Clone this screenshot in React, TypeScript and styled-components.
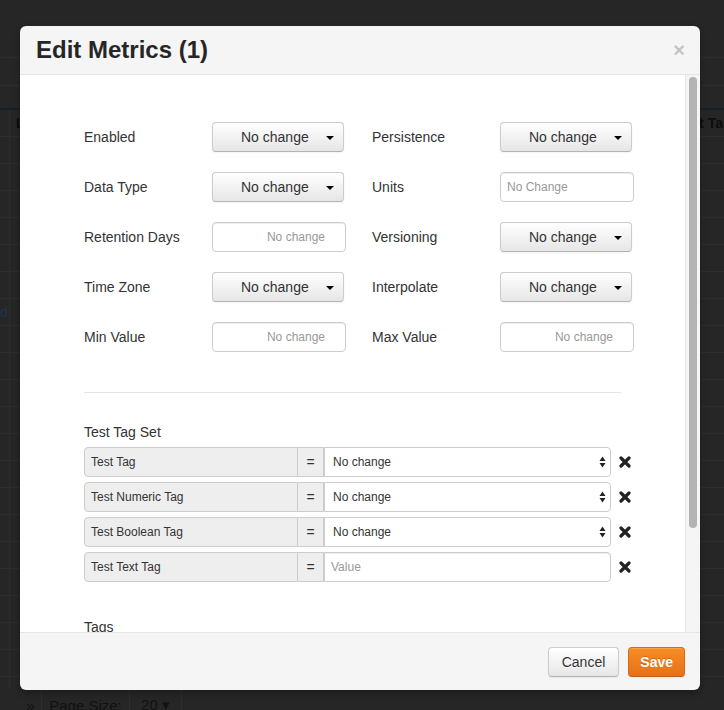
import React from "react";
import styled, { createGlobalStyle } from "styled-components";

const GlobalStyle = createGlobalStyle`
  html, body { margin: 0; padding: 0; height: 100%; background: #262626; overflow: hidden; }
  body { font-family: "Liberation Sans", Arial, Helvetica, sans-serif; }
  * { box-sizing: border-box; }
`;

/* ---------- page behind the modal ---------- */
const Behind = styled.div`
  position: fixed;
  inset: 0;
  display: flex;
  flex-direction: column;
  background: #262626;
  overflow: hidden;
`;
const TopStrip = styled.div<{ $h: number }>`
  height: ${(p) => p.$h}px;
  flex-shrink: 0;
  border-bottom: 1px solid #2e2e2e;
`;
const TopRest = styled.div`
  height: 24px;
  flex-shrink: 0;
  border-bottom: 2px solid #14202c;
`;
const TableRow = styled.div<{ $head?: boolean }>`
  height: 27px;
  flex-shrink: 0;
  display: flex;
  border-bottom: 1px solid #2d2d2d;
  font-size: 14px;
  font-weight: ${(p) => (p.$head ? "bold" : "normal")};
  color: #0d0d0d;
`;
const EdgeCell = styled.div`
  width: 10px;
  flex-shrink: 0;
  border-right: 1px solid #2d2d2d;
  display: flex;
  align-items: center;
  color: #1c3450;
  overflow: hidden;
`;
const MainCell = styled.div`
  flex: 1;
  padding-left: 6px;
  display: flex;
  align-items: center;
  overflow: hidden;
  white-space: nowrap;
`;
const TailCell = styled.div`
  width: 54px;
  flex-shrink: 0;
  padding-left: 6px;
  display: flex;
  align-items: center;
  overflow: hidden;
  white-space: nowrap;
`;
const Rows = styled.div`
  flex: 0 0 578px;
  overflow: hidden;
  display: flex;
  flex-direction: column;
`;
const Pager = styled.div`
  height: 34px;
  flex-shrink: 0;
  display: flex;
  align-items: stretch;
  font-size: 15px;
  color: #111;
  padding-left: 20px;
`;
const PagerCell = styled.div<{ $w: number }>`
  width: ${(p) => p.$w}px;
  display: flex;
  align-items: center;
  justify-content: center;
  border-right: 1px solid #2e2e2e;
  white-space: nowrap;
`;

/* ---------- modal ---------- */
const Overlay = styled.div`
  position: fixed;
  inset: 0;
  padding: 26px 0 0 20px;
`;
const Modal = styled.div`
  width: 680px;
  height: 664px;
  display: flex;
  flex-direction: column;
  background: #f5f5f5;
  border-radius: 6px;
  overflow: hidden;
  box-shadow: 0 3px 7px rgba(0, 0, 0, 0.3);
`;
const Header = styled.div`
  height: 49px;
  flex-shrink: 0;
  display: flex;
  align-items: center;
  justify-content: space-between;
  padding: 0 15px 0 16px;
  border-bottom: 1px solid #e5e5e5;
`;
const Title = styled.h3`
  margin: 0;
  font-size: 24px;
  font-weight: bold;
  color: #262626;
`;
const Close = styled.button`
  border: 0;
  background: none;
  padding: 0;
  font-family: inherit;
  font-size: 20px;
  font-weight: bold;
  line-height: 20px;
  color: #000;
  opacity: 0.2;
`;
const Body = styled.div`
  flex: 1;
  min-height: 0;
  display: flex;
  background: #f5f5f5;
`;
const Viewport = styled.div`
  flex: 1;
  min-width: 0;
  overflow: hidden;
`;
const Rail = styled.div`
  width: 14px;
  flex-shrink: 0;
  padding: 2px 3px;
`;
const Thumb = styled.div`
  width: 8px;
  background: #b3b3b3;
  border-radius: 4px;
`;
const Content = styled.div`
  background: #fff;
  border-right: 1px solid #e5e5e5;
  padding: 47px 64px 95px;
`;
const FormGrid = styled.div`
  display: grid;
  grid-template-columns: 128px 134px 26px 128px 134px;
  grid-auto-rows: 30px;
  row-gap: 20px;
`;
const Label = styled.label<{ $col: number }>`
  grid-column: ${(p) => p.$col};
  align-self: center;
  font-size: 14px;
  color: #333;
`;
const Ctrl = styled.div<{ $col: number }>`
  grid-column: ${(p) => p.$col};
  display: flex;
`;
const DropBtn = styled.button`
  width: 132px;
  height: 30px;
  display: flex;
  align-items: center;
  justify-content: space-between;
  padding: 0 9px 0 28px;
  font-family: inherit;
  font-size: 14px;
  color: #333;
  background: linear-gradient(#ffffff, #e6e6e6);
  border: 1px solid #cccccc;
  border-bottom-color: #b3b3b3;
  border-radius: 4px;
  box-shadow: inset 0 1px 0 rgba(255, 255, 255, 0.2), 0 1px 2px rgba(0, 0, 0, 0.05);
`;
const Caret = styled.span`
  width: 0;
  height: 0;
  margin-top: 2px;
  border-left: 4px solid transparent;
  border-right: 4px solid transparent;
  border-top: 4px solid #000;
`;
const TextInput = styled.input<{ $align?: "left" | "right" }>`
  width: 134px;
  height: 30px;
  padding: ${(p) => (p.$align === "left" ? "0 6px" : "0 20px 0 6px")};
  text-align: ${(p) => p.$align ?? "right"};
  font-family: inherit;
  font-size: 12px;
  color: #555;
  background: #fff;
  border: 1px solid #cccccc;
  border-radius: 4px;
  box-shadow: inset 0 1px 1px rgba(0, 0, 0, 0.075);
  outline: none;
  &::placeholder { color: #999; }
`;
const Divider = styled.hr`
  margin: 40px 0 0;
  border: 0;
  border-top: 1px solid #e5e5e5;
`;
const SectionTitle = styled.div<{ $top: number }>`
  margin-top: ${(p) => p.$top}px;
  font-size: 14px;
  line-height: 20px;
  color: #333;
`;
const TagList = styled.div`
  margin-top: 5px;
  display: flex;
  flex-direction: column;
  gap: 5px;
`;
const TagRow = styled.div`
  display: flex;
  align-items: center;
`;
const Group = styled.div`
  width: 527px;
  flex-shrink: 0;
  height: 30px;
  display: flex;
  font-size: 12px;
  color: #333;
`;
const Addon = styled.div<{ $w: number; $first?: boolean }>`
  width: ${(p) => p.$w}px;
  flex-shrink: 0;
  display: flex;
  align-items: center;
  justify-content: ${(p) => (p.$first ? "flex-start" : "center")};
  padding-left: ${(p) => (p.$first ? "6px" : "0")};
  background: #eeeeee;
  border: 1px solid #cccccc;
  border-left-width: ${(p) => (p.$first ? "1px" : "0")};
  border-radius: ${(p) => (p.$first ? "4px 0 0 4px" : "0")};
  font-size: ${(p) => (p.$first ? "12px" : "14px")};
`;
const FakeSelect = styled.div`
  flex: 1;
  display: flex;
  align-items: center;
  justify-content: space-between;
  padding: 0 4px 0 8px;
  background: #fff;
  border: 1px solid #cccccc;
  border-radius: 0 4px 4px 0;
`;
const GroupInput = styled.input`
  flex: 1;
  min-width: 0;
  padding: 0 6px;
  font-family: inherit;
  font-size: 12px;
  background: #fff;
  border: 1px solid #cccccc;
  border-radius: 0 4px 4px 0;
  box-shadow: inset 0 1px 1px rgba(0, 0, 0, 0.075);
  outline: none;
  &::placeholder { color: #999; }
`;
const Remove = styled.button`
  margin-left: 8px;
  width: 13px;
  height: 13px;
  padding: 0;
  border: 0;
  background: none;
  display: flex;
  align-items: center;
  justify-content: center;
`;
const Footer = styled.div`
  height: 58px;
  flex-shrink: 0;
  display: flex;
  align-items: center;
  justify-content: flex-end;
  gap: 9px;
  padding: 0 15px 0 0;
  border-top: 1px solid #e5e5e5;
`;
const Button = styled.button<{ $primary?: boolean }>`
  height: 30px;
  padding: 0 ${(p) => (p.$primary ? "11px" : "13px")};
  font-family: inherit;
  font-size: 14px;
  font-weight: ${(p) => (p.$primary ? "bold" : "normal")};
  color: ${(p) => (p.$primary ? "#fff" : "#333")};
  background: ${(p) =>
    p.$primary ? "linear-gradient(#f68d22, #e6711a)" : "linear-gradient(#ffffff, #e6e6e6)"};
  border: 1px solid ${(p) => (p.$primary ? "#d8691a" : "#cccccc")};
  border-bottom-color: ${(p) => (p.$primary ? "#c25e12" : "#b3b3b3")};
  border-radius: 4px;
  box-shadow: inset 0 1px 0 rgba(255, 255, 255, 0.2), 0 1px 2px rgba(0, 0, 0, 0.05);
  text-shadow: ${(p) => (p.$primary ? "0 -1px 0 rgba(0,0,0,0.2)" : "0 1px 1px rgba(255,255,255,0.75)")};
`;

const Arrows = () => (
  <svg width="7" height="12" viewBox="0 0 7 12">
    <polygon points="0.5,5 3.5,0.5 6.5,5" fill="#222" />
    <polygon points="0.5,7 6.5,7 3.5,11.5" fill="#222" />
  </svg>
);

const XIcon = () => (
  <svg width="12" height="12" viewBox="0 0 12 12">
    <path d="M2 2 L10 10 M10 2 L2 10" stroke="#222" strokeWidth="3.2" strokeLinecap="round" />
  </svg>
);

type Field = { label: string; kind: "drop" | "num" | "text"; placeholder?: string };
const rows: [Field, Field][] = [
  [{ label: "Enabled", kind: "drop" }, { label: "Persistence", kind: "drop" }],
  [{ label: "Data Type", kind: "drop" }, { label: "Units", kind: "text", placeholder: "No Change" }],
  [{ label: "Retention Days", kind: "num", placeholder: "No change" }, { label: "Versioning", kind: "drop" }],
  [{ label: "Time Zone", kind: "drop" }, { label: "Interpolate", kind: "drop" }],
  [{ label: "Min Value", kind: "num", placeholder: "No change" }, { label: "Max Value", kind: "num", placeholder: "No change" }],
];

const renderControl = (f: Field) => {
  if (f.kind === "drop")
    return (
      <DropBtn>
        <span>No change</span>
        <Caret />
      </DropBtn>
    );
  if (f.kind === "text") return <TextInput $align="left" placeholder={f.placeholder} />;
  return <TextInput placeholder={f.placeholder} />;
};

const tags: { name: string; select: boolean }[] = [
  { name: "Test Tag", select: true },
  { name: "Test Numeric Tag", select: true },
  { name: "Test Boolean Tag", select: true },
  { name: "Test Text Tag", select: false },
];

export default function App() {
  return (
    <>
      <GlobalStyle />
      <Behind>
        <TopStrip $h={58} />
        <TopStrip $h={28} />
        <TopRest />
        <Rows>
          <TableRow $head>
            <EdgeCell />
            <MainCell>Last Updated</MainCell>
            <TailCell>Test Tags</TailCell>
          </TableRow>
          {Array.from({ length: 22 }).map((_, i) => (
            <TableRow key={i}>
              <EdgeCell>{i === 6 ? "d" : ""}</EdgeCell>
              <MainCell />
              <TailCell />
            </TableRow>
          ))}
        </Rows>
        <Pager>
          <PagerCell $w={22}>»</PagerCell>
          <PagerCell $w={88}>Page Size:</PagerCell>
          <PagerCell $w={52}>20 ▾</PagerCell>
        </Pager>
      </Behind>

      <Overlay>
        <Modal>
          <Header>
            <Title>Edit Metrics (1)</Title>
            <Close>×</Close>
          </Header>
          <Body>
            <Viewport>
              <Content>
                <FormGrid>
                  {rows.map(([a, b]) => (
                    <React.Fragment key={a.label}>
                      <Label $col={1}>{a.label}</Label>
                      <Ctrl $col={2}>{renderControl(a)}</Ctrl>
                      <Label $col={4}>{b.label}</Label>
                      <Ctrl $col={5}>{renderControl(b)}</Ctrl>
                    </React.Fragment>
                  ))}
                </FormGrid>
                <Divider />
                <SectionTitle $top={29}>Test Tag Set</SectionTitle>
                <TagList>
                  {tags.map((t) => (
                    <TagRow key={t.name}>
                      <Group>
                        <Addon $w={214} $first>{t.name}</Addon>
                        <Addon $w={26}>=</Addon>
                        {t.select ? (
                          <FakeSelect>
                            <span>No change</span>
                            <Arrows />
                          </FakeSelect>
                        ) : (
                          <GroupInput placeholder="Value" />
                        )}
                      </Group>
                      <Remove>
                        <XIcon />
                      </Remove>
                    </TagRow>
                  ))}
                </TagList>
                <SectionTitle $top={35}>Tags</SectionTitle>
                <TagList>
                  <TagRow>
                    <Group>
                      <Addon $w={214} $first>Key</Addon>
                      <Addon $w={26}>=</Addon>
                      <GroupInput placeholder="Value" />
                    </Group>
                    <Remove>
                      <XIcon />
                    </Remove>
                  </TagRow>
                </TagList>
              </Content>
            </Viewport>
            <Rail>
              <Thumb style={{ height: 451 }} />
            </Rail>
          </Body>
          <Footer>
            <Button>Cancel</Button>
            <Button $primary>Save</Button>
          </Footer>
        </Modal>
      </Overlay>
    </>
  );
}
